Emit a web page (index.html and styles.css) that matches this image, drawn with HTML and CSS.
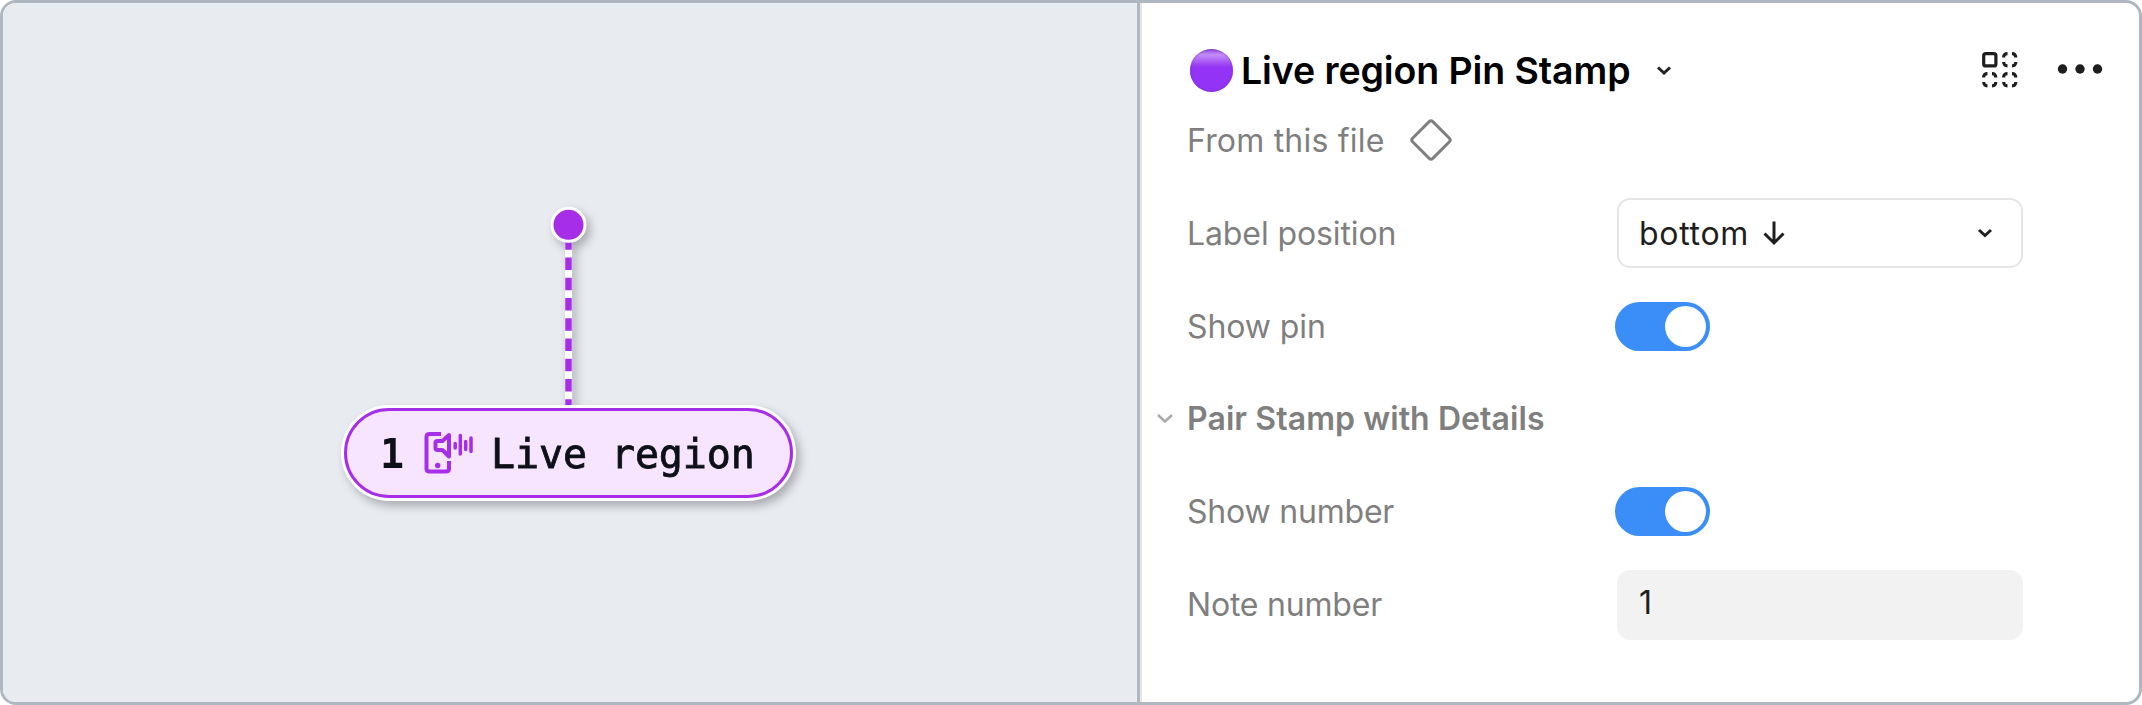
FILE: index.html
```html
<!DOCTYPE html>
<html lang="en">
<head>
<meta charset="utf-8">
<title>Live region Pin Stamp</title>
<link rel="stylesheet" href="styles.css">
</head>
<body>
<main class="frame">
  <section class="canvas">
    <div class="stamp">
      <svg class="pin" width="61" height="203" viewBox="0 0 61 203">
        <path class="pin-back" d="M30.500 37V202"/>
        <path class="pin-dash" d="M30.500 31.200V202"/>
        <circle class="pin-dot" cx="30.500" cy="18.800" r="16.500"/>
      </svg>
      <div class="pill">
        <span class="pill-number">1</span>
        <svg class="pill-icon" width="50" height="44" viewBox="0 0 50 44">
          <path class="ic-line" d="M17 3H5.500Q2.500 3 2.500 6V37.500Q2.500 40.500 5.500 40.500H22Q25 40.500 25 37.500V30"/>
          <path class="ic-line" d="M25 4L18.500 10H13.500Q11.500 10 11.500 12V17Q11.500 19 13.500 19H18.500L25 25.500Z"/>
          <circle class="ic-dot" cx="13.700" cy="34.500" r="2.700"/>
          <path class="ic-wave" d="M31.200 12.500V17M36.300 4.500V23M41.700 10.500V18.500M47 7V20.500"/>
        </svg>
        <span class="pill-text">Live region</span>
      </div>
    </div>
  </section>
  <section class="panel">
    <header class="head">
      <span class="ball"></span>
      <h1 class="title">Live region Pin Stamp</h1>
      <svg class="chev head-chev" width="16" height="10" viewBox="0 0 16 10"><path d="M2 2.500L8 8L14 2.500"/></svg>
      <svg class="grid-icon" width="36" height="36" viewBox="0 0 36 36">
        <rect x="1.700" y="1.700" width="12.200" height="12.200" rx="2"/>
        <g id="dashed">
          <path d="M21.700 5.500V4.500Q21.700 3.500 23 2.300Q23.500 1.700 25.500 1.700M30 1.700Q32 1.700 32.600 2.300Q33.800 3.500 33.800 5.500M33.800 10Q33.800 12 32.600 13.200Q32 13.800 30 13.800M25.500 13.800Q23.500 13.800 22.900 13.200Q21.700 12 21.700 10"/>
        </g>
        <use href="#dashed" y="20"/>
        <use href="#dashed" x="-20" y="20"/>
      </svg>
      <svg class="dots" width="46" height="12" viewBox="0 0 46 12"><circle cx="5.500" cy="5" r="4.700"/><circle cx="23" cy="5" r="4.700"/><circle cx="40.500" cy="5" r="4.700"/></svg>
    </header>
    <div class="row source">
      <span class="t-from">From this file</span>
      <svg class="diamond" width="42" height="42" viewBox="0 0 42 42"><path d="M19.200 2.600Q21 .9 22.800 2.600L39.400 19.200Q41.100 21 39.400 22.800L22.800 39.400Q21 41.100 19.200 39.400L2.600 22.800Q.9 21 2.600 19.200Z"/></svg>
    </div>
    <div class="row">
      <span class="label">Label position</span>
      <div class="select"><span class="select-value">bottom</span>
        <svg class="arrow" width="22" height="26" viewBox="0 0 22 26"><path d="M11 1.500V23M1.500 13.500L11 23L20.500 13.500"/></svg>
        <svg class="chev sel-chev" width="16" height="10" viewBox="0 0 16 10"><path d="M2 2L8 7.500L14 2"/></svg>
      </div>
    </div>
    <div class="row">
      <span class="label">Show pin</span>
      <span class="toggle"></span>
    </div>
    <div class="row group">
      <svg class="chev group-chev" width="18" height="11" viewBox="0 0 18 11"><path d="M2 2L9 8.500L16 2"/></svg>
      <h2 class="group-title">Pair Stamp with Details</h2>
    </div>
    <div class="row">
      <span class="label label-tight">Show number</span>
      <span class="toggle"></span>
    </div>
    <div class="row">
      <span class="label label-tight">Note number</span>
      <div class="input">1</div>
    </div>
  </section>
</main>
</body>
</html>
```
FILE: styles.css
```css
* { box-sizing: border-box; }
body { margin: 0; background: #fff; }
.frame {
  display: flex;
  width: 2142px;
  height: 705px;
  border: 3px solid #afb8c1;
  border-radius: 16px;
  overflow: hidden;
  background: #fff;
  font-family: Inter, "Liberation Sans", sans-serif;
}
.canvas {
  width: 1137px;
  flex: none;
  border-right: 3px solid #afb8c1;
  background: #e8ebf0;
}
.stamp {
  display: flex;
  flex-direction: column;
  align-items: center;
  width: 449px;
  margin: 203px 0 0 341px;
  filter: drop-shadow(4px 5px 5px rgba(0, 0, 0, .27));
}
.pin { display: block; }
.pin-back { stroke: #fff; stroke-width: 7; }
.pin-dash { stroke: #a72ee8; stroke-width: 6.500; stroke-dasharray: 12.500 7.770; }
.pin-dot { fill: #a72ee8; stroke: #fff; stroke-width: 3; }
.pill {
  display: flex;
  align-items: center;
  width: 449px;
  height: 90px;
  margin-top: -1px;
  padding-left: 33px;
  border: 3px solid #a72ee8;
  border-radius: 45px;
  background: #f7e5ff;
  box-shadow: 0 0 0 3px #fff;
  font: 40px/1 "DejaVu Sans Mono", monospace;
  color: #0d1117;
  white-space: nowrap;
}
.pill-number { width: 24px; padding-top: 1px; font-weight: 700; }
.pill-icon { margin: 0 17px 0 20px; fill: none; }
.pill-text { padding-top: 1px; -webkit-text-stroke: .8px #0d1117; letter-spacing: -.1px; }
.ic-line { stroke: #a72ee8; stroke-width: 4; stroke-linejoin: round; }
.ic-wave { stroke: #a72ee8; stroke-width: 3.500; stroke-linecap: round; }
.ic-dot { fill: #a72ee8; }
.panel {
  flex: 1;
  padding-left: 46px;
  border-left: 2px solid #e6e6e6;
  color: #7f7f7f;
  font-size: 32px;
  letter-spacing: -.1px;
}
.head { display: flex; align-items: center; height: 91px; padding-top: 43px; }
.ball {
  width: 43px;
  height: 43px;
  margin-left: 2px;
  border-radius: 50%;
  background: linear-gradient(#8a43d8 0, #c48cf8 13%, #b069f6 25%, #9333f5 42%, #9333f5 100%);
  box-shadow: inset 0 0 2px #7129b8;
}
.title { flex: none; margin: 0; color: #000; font-size: 37.500px; line-height: 46px; font-weight: 600; letter-spacing: -.1px; white-space: nowrap; width: 397px; padding: 1px 0 0 8px; }
.chev { flex: none; fill: none; stroke: #222; stroke-width: 3; }
.head-chev { margin-left: 26px; }
.grid-icon { flex: none; margin-left: 310px; fill: none; stroke: #1e1e1e; stroke-width: 3.200; }
.dots { flex: none; margin-left: 39px; fill: #1e1e1e; }
.row { display: flex; align-items: center; height: 92.800px; white-space: nowrap; }
.source { height: 93px; padding-bottom: 1px; }
.t-from { margin-left: -1px; letter-spacing: .2px; }
.label { width: 430px; flex: none; margin-left: -1px; }
.label-tight { letter-spacing: -.2px; }
.diamond { margin-left: 25px; fill: none; stroke: #7f7f7f; stroke-width: 3; }
.select, .input {
  display: flex;
  align-items: center;
  width: 406px;
  height: 70px;
  border-radius: 13px;
  color: #1e1e1e;
}
.select { padding: 0 28px 0 20px; border: 2px solid #e6e6e6; }
.select-value { letter-spacing: .7px; }
.arrow { margin-left: 14px; fill: none; stroke: #1e1e1e; stroke-width: 3; }
.sel-chev { margin-left: auto; }
.input { padding: 0 0 4px 22px; background: #f2f2f2; }
.toggle {
  display: flex;
  justify-content: flex-end;
  width: 95px;
  height: 49px;
  margin-left: -2px;
  padding: 4px;
  border-radius: 25px;
  background: #3b8df8;
}
.toggle::after { content: ""; width: 41px; height: 41px; border-radius: 50%; background: #fff; }
.group { margin-left: -32px; }
.group-chev { stroke: #aaa; stroke-width: 2.500; }
.group-title { margin: 0 0 0 13px; font-size: 32px; font-weight: 600; letter-spacing: .08px; }
```
